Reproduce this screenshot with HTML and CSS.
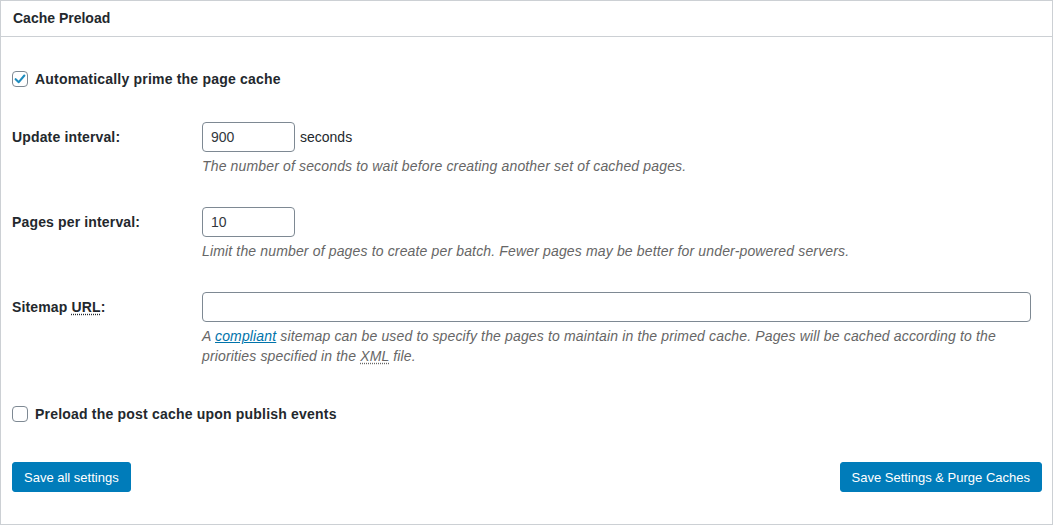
FILE: index.html
```html
<!DOCTYPE html>
<html lang="en">
<head>
  <meta charset="UTF-8" />
  <title>Cache Preload</title>
  <link rel="stylesheet" href="styles.css">
</head>
<body>
  <div class="postbox">
    <h2 class="hndle">Cache Preload</h2>
    <div class="inside">
      <label class="check-row first">
        <span class="cb checked">
          <svg viewBox="0 0 16 16" width="14" height="14"><polyline points="3,8.2 6.6,11.6 13,4" fill="none" stroke="#1e8cbe" stroke-width="2.4" stroke-linecap="round" stroke-linejoin="round" /></svg>
        </span>
        Automatically prime the page cache
      </label>

      <div class="form-table">
        <div class="row">
          <label class="th" for="interval">Update interval:</label>
          <div class="td">
            <div class="field"><input type="text" id="interval" class="small" value="900" /> seconds</div>
            <p class="description">The number of seconds to wait before creating another set of cached pages.</p>
          </div>
        </div>
        <div class="row">
          <label class="th" for="pages">Pages per interval:</label>
          <div class="td">
            <div class="field"><input type="text" id="pages" class="small" value="10" /></div>
            <p class="description">Limit the number of pages to create per batch. Fewer pages may be better for under-powered servers.</p>
          </div>
        </div>
        <div class="row">
          <label class="th" for="sitemap">Sitemap <abbr title="Uniform Resource Locator">URL</abbr>:</label>
          <div class="td">
            <div class="field"><input type="text" id="sitemap" class="wide" value="" /></div>
            <p class="description">A <a href="#">compliant</a> sitemap can be used to specify the pages to maintain in the primed cache. Pages will be cached according to the priorities specified in the <abbr title="Extensible Markup Language">XML</abbr> file.</p>
          </div>
        </div>
      </div>

      <label class="check-row second">
        <span class="cb"></span>
        Preload the post cache upon publish events
      </label>

      <div class="actions">
        <button class="button-primary">Save all settings</button>
        <button class="button-primary">Save Settings &amp; Purge Caches</button>
      </div>
    </div>
  </div>
</body>
</html>
```

FILE: styles.css
```css
body {
  margin: 0;
  background: #fff;
  font-family: "Liberation Sans", Arial, sans-serif;
  font-size: 13px;
  color: #23282d;
}
.postbox {
  width: 1053px;
  box-sizing: border-box;
  border: 1px solid #ccd0d4;
  background: #fff;
}
.hndle {
  margin: 0;
  padding: 8px 12px;
  font-size: 14px;
  line-height: 19px;
  font-weight: bold;
  border-bottom: 1px solid #ccd0d4;
}
.inside {
  padding: 0 10px 32px 11px;
}
.check-row {
  display: flex;
  align-items: center;
  gap: 7px;
  height: 20px;
  font-size: 14px;
  font-weight: bold;
  letter-spacing: 0.2px;
}
.check-row.first { margin-top: 32px; }
.check-row.second { margin-top: 22px; }
.cb {
  width: 16px;
  height: 16px;
  box-sizing: border-box;
  border: 1px solid #7e8993;
  border-radius: 4px;
  display: flex;
  align-items: center;
  justify-content: center;
  background: #fff;
}
.form-table { margin-top: 18px; }
.row {
  display: grid;
  grid-template-columns: 190px 1fr;
  padding: 15px 0 16px;
}
.th {
  font-size: 14px;
  font-weight: bold;
  line-height: 30px;
  height: 30px;
  letter-spacing: 0.15px;
}
.td { padding-right: 10px; }
.field {
  display: flex;
  align-items: center;
  gap: 5px;
  font-size: 14px;
  height: 30px;
}
input[type="text"] {
  height: 30px;
  box-sizing: border-box;
  border: 1px solid #7e8993;
  border-radius: 4px;
  padding: 0 8px;
  font-family: "Liberation Sans", Arial, sans-serif;
  font-size: 14px;
  color: #32373c;
  margin: 0;
}
input.small { width: 93px; }
input.wide { width: 829px; }
abbr {
  text-decoration: underline dotted;
  text-underline-offset: 2px;
}
.description {
  margin: 4px 0 0;
  font-size: 14px;
  font-style: italic;
  color: #666;
  line-height: 20px;
  letter-spacing: 0.15px;
}
.description a { color: #0073aa; }
.actions {
  display: flex;
  justify-content: space-between;
  margin-top: 38px;
}
.button-primary {
  height: 30px;
  padding: 0 11px;
  background: #007cba;
  border: 1px solid #007cba;
  border-radius: 3px;
  color: #fff;
  font-family: "Liberation Sans", Arial, sans-serif;
  font-size: 13px;
  cursor: pointer;
}
```
